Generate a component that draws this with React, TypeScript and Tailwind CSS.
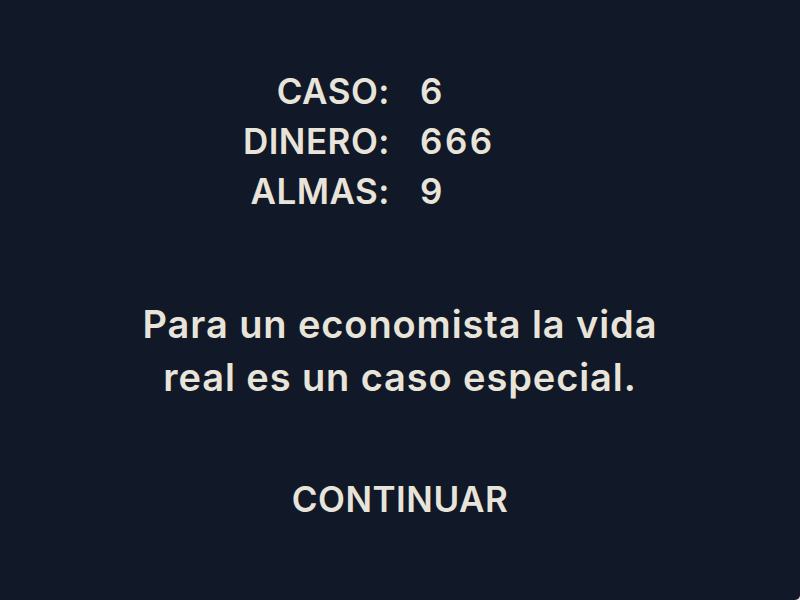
const stats = [
  { label: "CASO:", value: "6" },
  { label: "DINERO:", value: "666" },
  { label: "ALMAS:", value: "9" },
];

export default function App() {
  return (
    <div className="w-full h-[600px] bg-[#e8e4da]">
      <main
        className="w-full h-[600px] bg-[#111827] text-[#e8e4da] flex flex-col items-center rounded-br-[5px]"
        style={{ fontFamily: '"Inter", "Liberation Sans", sans-serif' }}
      >
        {/* Stats */}
        <div className="w-full grid grid-cols-2 gap-x-[30px] pl-[10px] pt-[66px]">
          {stats.map((s) => (
            <div key={s.label} className="contents">
              <div className="text-right text-[35px] leading-[50px] font-semibold tracking-[0.5px]">
                {s.label}
              </div>
              <div className="text-left text-[35px] leading-[50px] font-semibold tracking-[2.5px]">
                {s.value}
              </div>
            </div>
          ))}
        </div>

        {/* Quote */}
        <p className="mt-[82px] w-[560px] text-center text-[38px] leading-[53px] font-semibold tracking-[0.9px]">
          Para un economista la vida real es un caso especial.
        </p>

        {/* Button */}
        <button className="mt-[70px] text-[35px] leading-[50px] font-semibold tracking-[0.5px] text-[#e8e4da]">
          CONTINUAR
        </button>
      </main>
    </div>
  );
}
